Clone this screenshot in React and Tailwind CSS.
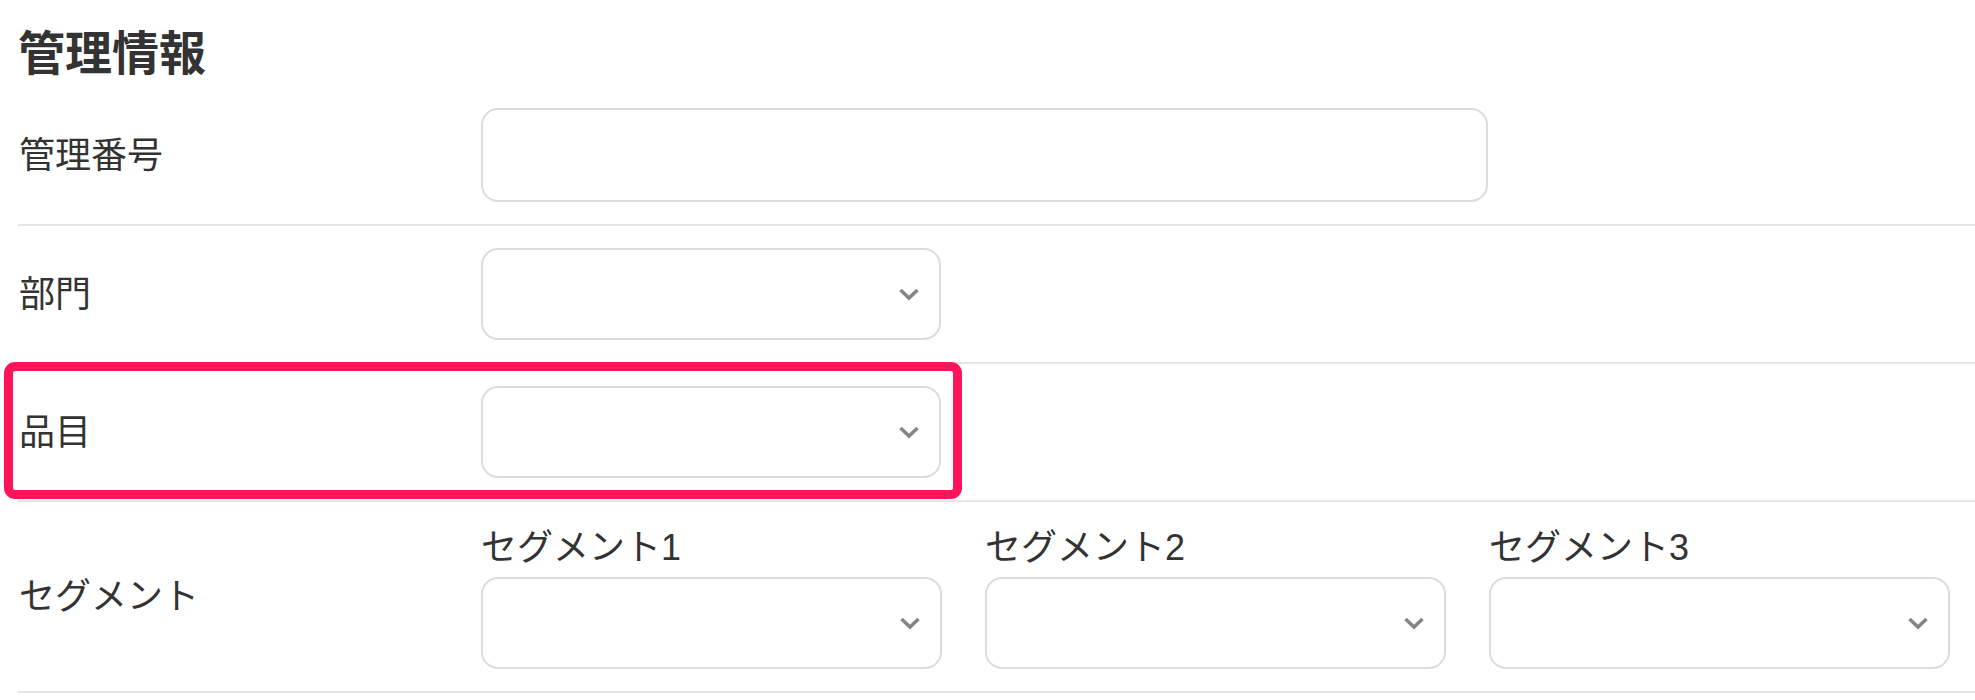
import React from "react";

const FONT = { fontFamily: '"Liberation Sans", Arial, "Noto Sans CJK JP", sans-serif' };

function Chevron() {
  return (
    <svg width="22" height="14" viewBox="0 0 22 14" fill="none">
      <polyline points="2.5,3 11,11 19.5,3" stroke="#858585" strokeWidth="3.6" strokeLinecap="butt" strokeLinejoin="miter" />
    </svg>
  );
}

function Select({ w = "w-[460px]" }) {
  return (
    <div className={`${w} h-[92px] rounded-[17px] border-2 border-[#dcdcdc] bg-white flex items-center justify-end pr-[19px]`}>
      <Chevron />
    </div>
  );
}

function Row({ label, children, relative = false, overlay = null }) {
  return (
    <div className={`${relative ? "relative" : ""} flex items-center border-b-2 border-[#e6e6e6] py-[22px]`}>
      <div className="w-[463px] shrink-0 text-[36px] leading-[47px] text-[#333] pl-[1px]">{label}</div>
      <div className="flex-1">{children}</div>
      {overlay}
    </div>
  );
}

export default function App() {
  return (
    <div className="w-[1975px] h-[700px] bg-white overflow-hidden pl-[18px]" style={FONT}>
      <div className="pt-[28px] mb-[6px] text-[47px] leading-[52px] font-bold text-[#333]">管理情報</div>

      <Row label="管理番号">
        <div className="w-[1007px] h-[94px] rounded-[17px] border-2 border-[#dcdcdc] bg-white" />
      </Row>

      <Row label="部門">
        <Select />
      </Row>

      <Row
        label="品目"
        relative
        overlay={
          <div className="absolute top-[-2px] bottom-[1px] left-[-14px] w-[958px] border-[9px] border-[#ff1459] rounded-[11px] pointer-events-none" />
        }
      >
        <Select />
      </Row>

      <Row label="セグメント">
        <div className="flex gap-[43px]">
          {["セグメント1", "セグメント2", "セグメント3"].map((t) => (
            <div key={t} className="flex flex-col">
              <div className="text-[36px] leading-[47px] text-[#333] mb-[6px]">{t}</div>
              <Select w="w-[461px]" />
            </div>
          ))}
        </div>
      </Row>
    </div>
  );
}
